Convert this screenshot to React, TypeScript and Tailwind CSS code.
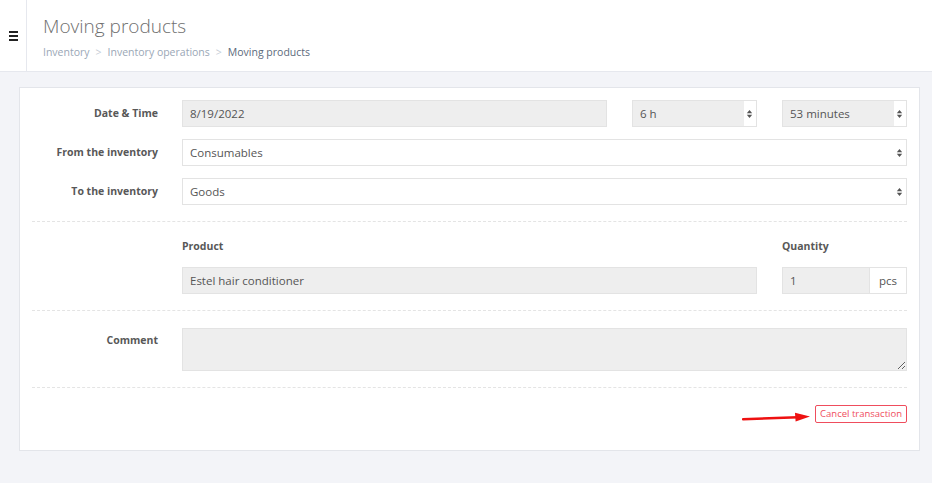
import React from "react";

const Arrows = () => (
	<svg width="7" height="10" viewBox="0 0 7 10" className="shrink-0">
		<path d="M3.5 1 L6.2 4.3 H0.8 Z M3.5 9 L6.2 5.7 H0.8 Z" fill="#555" />
	</svg>
);

const Select = ({ value, gray = false, className = "" }: { value: string; gray?: boolean; className?: string }) => (
	<div className={`flex h-[27px] border border-[#e3e3e3] ${className}`}>
		<div className={`flex flex-1 items-center px-[7px] ${gray ? "bg-[#eeeeee]" : "bg-white"}`}>{value}</div>
		<div className="flex w-[12px] items-center justify-center bg-white pr-[1px]">
			<Arrows />
		</div>
	</div>
);

const Field = ({ label, children }: { label: string; children: React.ReactNode }) => (
	<div className="flex items-center">
		<div className="w-[150px] pr-[24px] text-right text-[10.5px] font-bold text-[#585858]">{label}</div>
		<div className="flex-1">{children}</div>
	</div>
);

const Divider = () => <div className="border-t border-dashed border-[#e4e4e4]" />;

export default function App() {
	return (
		<div className="min-h-[483px] w-[932px] bg-[#f3f4f8] text-[11.5px] text-[#555]" style={{ fontFamily: '"Open Sans", "Liberation Sans", sans-serif' }}>
			<header className="flex h-[72px] border-b border-[#e6e8ee] bg-white">
				<div className="flex w-[27px] items-center justify-center border-r border-[#e6e8ee] pt-[1px]">
					<div className="flex w-[9px] flex-col gap-[2px]">
						<span className="h-[2px] bg-[#222]" />
						<span className="h-[2px] bg-[#222]" />
						<span className="h-[2px] bg-[#222]" />
					</div>
				</div>
				<div className="pl-[16px] pt-[13px]">
					<h1 className="text-[19px] font-light leading-[26px] text-[#6f6f6f]">Moving products</h1>
					<div className="mt-[6px] flex items-center gap-[6px] text-[10.5px] text-[#9aa7b6]">
						<span>Inventory</span>
						<span className="text-[#c5ccd5]">&gt;</span>
						<span>Inventory operations</span>
						<span className="text-[#c5ccd5]">&gt;</span>
						<span className="text-[#5b6a7b]">Moving products</span>
					</div>
				</div>
			</header>

			<div className="px-[19px] pt-[15px] pb-[31px] pr-[12px]">
				<div className="border border-[#e3e5ea] bg-white px-[12px] pt-[12px] pb-[27px]">
					<div className="flex flex-col gap-[12px]">
						<Field label="Date & Time">
							<div className="flex gap-[25px]">
								<div className="flex h-[27px] flex-1 items-center border border-[#e3e3e3] bg-[#eeeeee] px-[7px]">8/19/2022</div>
								<Select value="6 h" gray className="w-[125px]" />
								<Select value="53 minutes" gray className="w-[125px]" />
							</div>
						</Field>
						<Field label="From the inventory">
							<Select value="Consumables" />
						</Field>
						<Field label="To the inventory">
							<Select value="Goods" />
						</Field>
					</div>

					<div className="mt-[16px]">
						<Divider />
					</div>

					<div className="flex pl-[150px] pt-[17px]">
						<div className="flex flex-1 flex-col">
							<div className="text-[10.5px] font-bold leading-[15px] text-[#585858]">Product</div>
							<div className="mt-[13px] flex h-[27px] items-center border border-[#e3e3e3] bg-[#eeeeee] px-[7px]">Estel hair conditioner</div>
						</div>
						<div className="ml-[25px] flex w-[125px] flex-col">
							<div className="text-[10.5px] font-bold leading-[15px] text-[#585858]">Quantity</div>
							<div className="mt-[13px] flex h-[27px] border border-[#e3e3e3]">
								<div className="flex flex-1 items-center bg-[#eeeeee] px-[7px]">1</div>
								<div className="flex w-[37px] items-center justify-center border-l border-[#e3e3e3] bg-white">pcs</div>
							</div>
						</div>
					</div>

					<div className="mt-[16px]">
						<Divider />
					</div>

					<div className="flex pt-[17px]">
						<div className="w-[150px] pr-[24px] pt-[5px] text-right text-[10.5px] font-bold text-[#585858]">Comment</div>
						<textarea
							readOnly
							className="block h-[43px] flex-1 resize-y border border-[#e3e3e3] bg-[#eeeeee] outline-none"
						/>
					</div>

					<div className="mt-[16px]">
						<Divider />
					</div>

					<div className="mt-[16px] flex items-center justify-end gap-[3px]">
						<svg width="70" height="14" viewBox="0 0 70 14" className="mt-[5px]">
							<path d="M1 10.2 L56 8.2" stroke="#ee1111" strokeWidth="2.4" strokeLinecap="round" />
							<path d="M53 3.8 L68 7.6 L53.6 12.4 Z" fill="#ee1111" />
						</svg>
						<button className="h-[18px] rounded-[2px] border border-[#ef4d5d] px-[4px] text-[9.5px] leading-none text-[#ef4d5d]">
							Cancel transaction
						</button>
					</div>
				</div>
			</div>
		</div>
	);
}
